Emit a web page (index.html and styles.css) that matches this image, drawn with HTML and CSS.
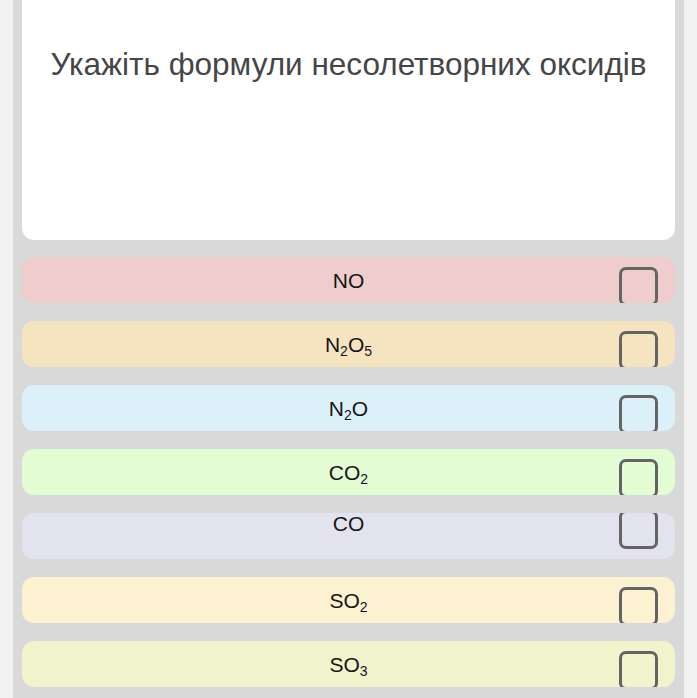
FILE: index.html
```html
<!DOCTYPE html>
<html lang="uk">
<head>
    <meta charset="UTF-8" />
    <meta name="viewport" content="width=device-width, initial-scale=1.0" />
    <title>Тест</title>
    <link rel="stylesheet" href="styles.css">
</head>
<body>
    <div class="panel">
        <div class="question-card">
            <p class="question">Укажіть формули несолетворних оксидів</p>
        </div>

        <div class="answers">
            <div class="answer answer-red">
                <span class="label">NO</span>
                <span class="box"></span>
            </div>
            <div class="answer answer-orange">
                <span class="label">N<sub>2</sub>O<sub>5</sub></span>
                <span class="box"></span>
            </div>
            <div class="answer answer-blue">
                <span class="label">N<sub>2</sub>O</span>
                <span class="box"></span>
            </div>
            <div class="answer answer-green">
                <span class="label">CO<sub>2</sub></span>
                <span class="box"></span>
            </div>
            <div class="answer answer-violet answer-shifted">
                <span class="label">CO</span>
                <span class="box"></span>
            </div>
            <div class="answer answer-yellow">
                <span class="label">SO<sub>2</sub></span>
                <span class="box"></span>
            </div>
            <div class="answer answer-lime">
                <span class="label">SO<sub>3</sub></span>
                <span class="box"></span>
            </div>
        </div>
    </div>
</body>
</html>
```

FILE: styles.css
```css
* {
    box-sizing: border-box;
}

body {
    margin: 0;
    background-color: #f2f2f2;
    font-family: "Liberation Sans", Arial, sans-serif;
}

.panel {
    margin: 0 13px;
    padding: 0 9px 20px;
    min-height: 698px;
    background-color: #d9d9d9;
}

.question-card {
    height: 240px;
    background-color: white;
    border-radius: 0 0 12px 12px;
    padding-top: 40px;
}

.question {
    margin: 0;
    text-align: center;
    font-size: 31.5px;
    line-height: 48px;
    color: #464646;
}

.answers {
    display: flex;
    flex-direction: column;
    gap: 18px;
    margin-top: 17px;
}

.answer {
    display: grid;
    grid-template-columns: 1fr auto 1fr;
    align-items: start;
    height: 46px;
    padding-top: 10px;
    border-radius: 12px;
    overflow: hidden;
}

.label {
    grid-column: 2;
    font-size: 21px;
    line-height: 28px;
    color: #151515;
}

.label sub {
    font-size: 14px;
    line-height: 0;
    vertical-align: -4px;
}

.box {
    grid-column: 3;
    justify-self: end;
    width: 39px;
    height: 39px;
    margin-right: 17px;
    border: 3px solid #646464;
    border-radius: 7px;
}

.answer-shifted {
    padding-top: 0;
}

.answer-shifted .label,
.answer-shifted .box {
    margin-top: -3px;
}

.answer-red { background-color: #f0cdcd; }
.answer-orange { background-color: #f6e3c0; }
.answer-blue { background-color: #dcf0f9; }
.answer-green { background-color: #e3fcd3; }
.answer-violet { background-color: #e3e3ef; }
.answer-yellow { background-color: #fcf1d1; }
.answer-lime { background-color: #f0f3cb; }
```
